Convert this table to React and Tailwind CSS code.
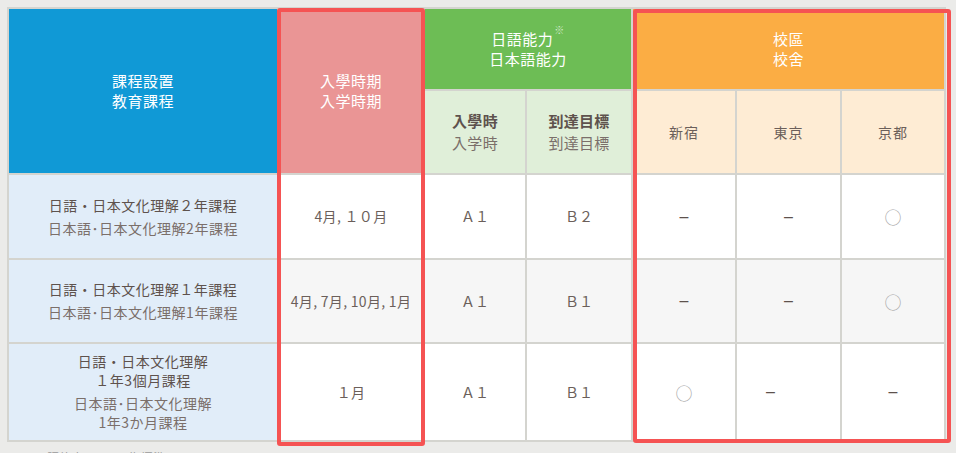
import React from "react";

const body = "text-[#6b5f5a]";

const courses = [
  {
    title: ["日語・日本文化理解２年課程"],
    sub: ["日本語･日本文化理解2年課程"],
    term: "4月, １０月",
    start: "Ａ１",
    goal: "Ｂ２",
    campus: ["-", "-", "o"],
    bg: "bg-white",
  },
  {
    title: ["日語・日本文化理解１年課程"],
    sub: ["日本語･日本文化理解1年課程"],
    term: "4月, 7月, 10月, 1月",
    start: "Ａ１",
    goal: "Ｂ１",
    campus: ["-", "-", "o"],
    bg: "bg-[#f6f6f6]",
  },
  {
    title: ["日語・日本文化理解", "１年3個月課程"],
    sub: ["日本語･日本文化理解", "1年3か月課程"],
    term: "１月",
    start: "Ａ１",
    goal: "Ｂ１",
    campus: ["o", "-", "-"],
    bg: "bg-white",
  },
];

const Mark = ({ type }) =>
  type === "o" ? (
    <span className="text-[17px] leading-none text-[#a9a9a9]">○</span>
  ) : (
    <span className="font-['Liberation_Sans',sans-serif] text-[16px] leading-none text-[#5e524d]">
      –
    </span>
  );

const App = () => {
  return (
    <div className="min-h-screen bg-[#ebebe9] pl-[7px] pt-[7px] font-['Noto_Sans_CJK_JP',sans-serif]">
      <div className="relative w-fit">
        <div className="grid w-fit grid-cols-[268px_144px_100px_104px_102px_103px_102px] grid-rows-[80px_82px_83px_82px_96px] gap-[2px] bg-[#d4d4cf] p-[2px]">
          {/* header */}
          <div className="row-span-2 flex flex-col items-center justify-center bg-[#1099d6] text-[15px] leading-[20px] tracking-[0.5px] text-white">
            <span>課程設置</span>
            <span>教育課程</span>
          </div>
          <div className="row-span-2 flex flex-col items-center justify-center bg-[#ea9595] text-[15px] leading-[20px] tracking-[0.5px] text-white">
            <span>入學時期</span>
            <span>入学時期</span>
          </div>
          <div className="col-span-2 flex flex-col items-center justify-center bg-[#6dbd55] text-[15px] leading-[20px] tracking-[0.5px] text-white">
            <span>
              日語能力
              <sup className="ml-[1px] align-top text-[10px] leading-[12px] text-white/70">※</sup>
            </span>
            <span>日本語能力</span>
          </div>
          <div className="col-span-3 flex flex-col items-center justify-center bg-[#fbad44] text-[15px] leading-[20px] tracking-[0.5px] text-white">
            <span>校區</span>
            <span>校舍</span>
          </div>

          {[
            ["入學時", "入学時"],
            ["到達目標", "到達目標"],
          ].map(([a, b]) => (
            <div
              key={a}
              className="flex flex-col items-center justify-center bg-[#e0efd9] leading-[22px] tracking-[0.3px]"
            >
              <span className="text-[15px] font-bold text-[#5e524d]">{a}</span>
              <span className="text-[15px] text-[#7b6f6a]">{b}</span>
            </div>
          ))}
          {["新宿", "東京", "京都"].map((c) => (
            <div
              key={c}
              className={`flex items-center justify-center bg-[#feecd4] text-[14px] tracking-[1px] ${body}`}
            >
              {c}
            </div>
          ))}

          {/* body */}
          {courses.map((row, i) => (
            <React.Fragment key={i}>
              <div className="flex flex-col items-center justify-center bg-[#e1edf9] text-[14px] tracking-[0.5px]">
                <div className="flex flex-col items-center leading-[19px] text-[#5e524d]">
                  {row.title.map((t) => (
                    <span key={t}>{t}</span>
                  ))}
                </div>
                <div className="mt-[4px] flex flex-col items-center leading-[19px] text-[#7b6f6a]">
                  {row.sub.map((t) => (
                    <span key={t}>{t}</span>
                  ))}
                </div>
              </div>
              <div
                className={`flex items-center justify-center text-[14px] tracking-[0.3px] ${row.bg} ${body}`}
              >
                {row.term}
              </div>
              <div
                className={`flex items-center justify-center text-[14px] ${row.bg} ${body}`}
              >
                {row.start}
              </div>
              <div
                className={`flex items-center justify-center text-[14px] ${row.bg} ${body}`}
              >
                {row.goal}
              </div>
              {row.campus.map((m, j) => (
                <div
                  key={j}
                  className={`flex items-center justify-center ${row.bg} ${
                    i === 2 && j === 1 ? "pr-[36px]" : ""
                  }`}
                >
                  <Mark type={m} />
                </div>
              ))}
            </React.Fragment>
          ))}
        </div>

        {/* highlight frames */}
        <div className="pointer-events-none absolute left-[270px] top-[1px] h-[438px] w-[148px] rounded-[3px] border-[4px] border-[#f55353]" />
        <div className="pointer-events-none absolute left-[626px] top-[2px] h-[434px] w-[318px] rounded-[3px] border-[4px] border-[#f55353]" />
      </div>

      <p className="ml-[15px] mt-[7px] text-[12px] tracking-[0.5px] text-[#9a9a9a]">
        ※日語能力以CEFR為標準
      </p>
    </div>
  );
};

export default App;
